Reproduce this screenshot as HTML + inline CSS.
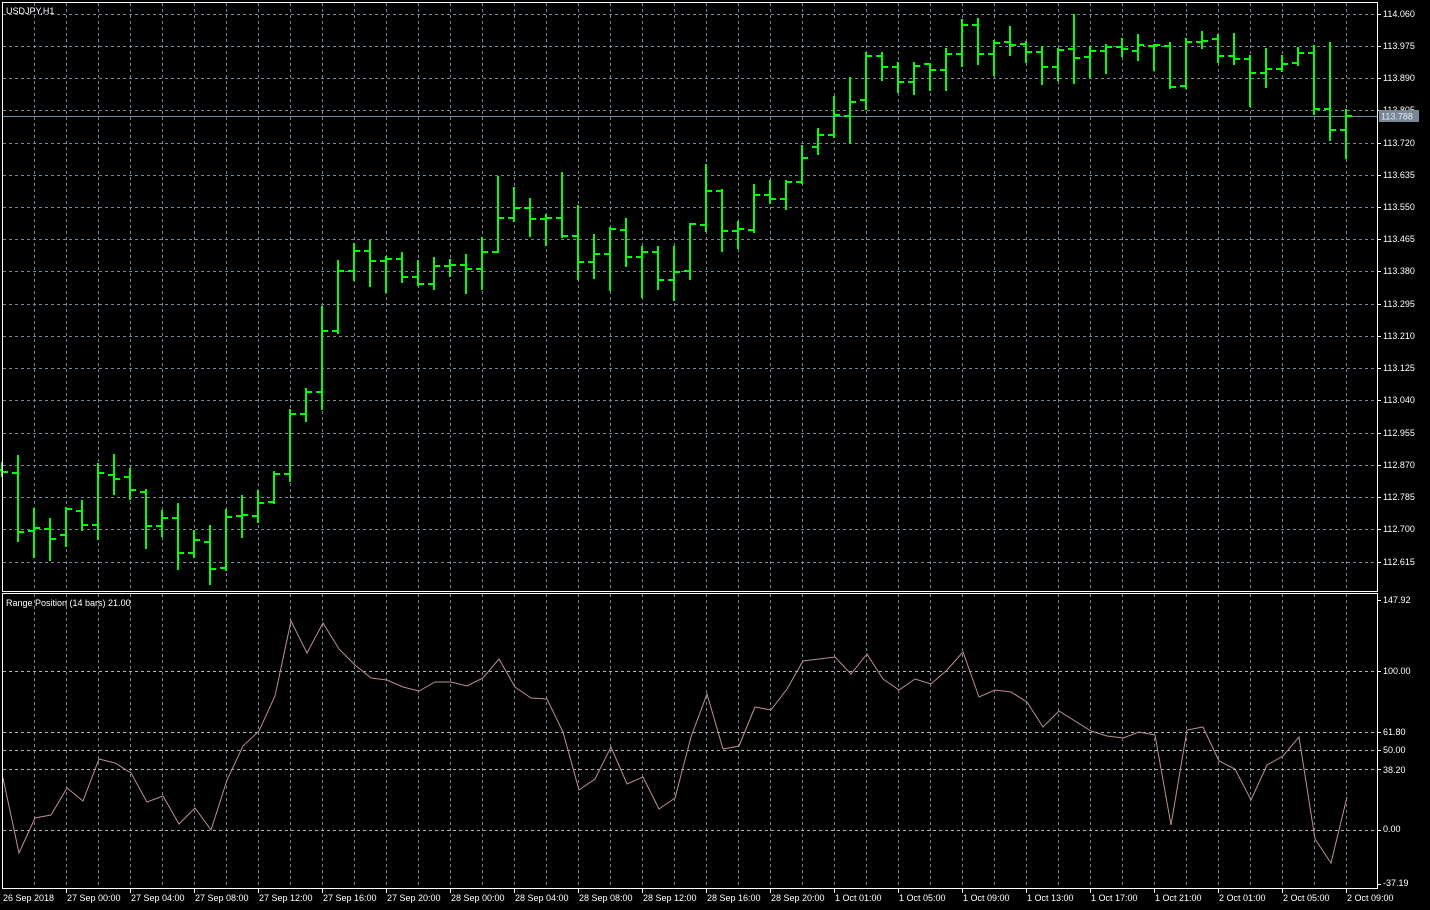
<!DOCTYPE html>
<html><head><meta charset="utf-8"><style>
html,body{margin:0;padding:0;background:#000;width:1430px;height:910px;overflow:hidden}
svg{display:block}
text{font-family:"Liberation Sans",sans-serif;font-size:9px;fill:#fff}
</style></head><body>
<svg id="s" width="1430" height="910" xmlns="http://www.w3.org/2000/svg">
<g id="grid"></g>
<line x1="2" y1="116.5" x2="1377" y2="116.5" stroke="#778899" stroke-width="1"/>
<g id="bars" fill="#00ff00"></g>
<polyline id="ind" fill="none" stroke="#bc8f8f" stroke-width="1"/>
<rect x="2.5" y="2.5" width="1375" height="589" fill="none" stroke="#fff"/>
<rect x="2.5" y="593.5" width="1375" height="295" fill="none" stroke="#fff"/>
<g id="ticks" stroke="#fff"></g>
<text x="6" y="14">USDJPY,H1</text>
<text x="6" y="606">Range Position (14 bars) 21.00</text>
<g>
<text x="1383" y="17">114.060</text>
<text x="1383" y="49">113.975</text>
<text x="1383" y="81">113.890</text>
<text x="1383" y="113">113.805</text>
<text x="1383" y="146">113.720</text>
<text x="1383" y="178">113.635</text>
<text x="1383" y="210">113.550</text>
<text x="1383" y="242">113.465</text>
<text x="1383" y="274">113.380</text>
<text x="1383" y="307">113.295</text>
<text x="1383" y="339">113.210</text>
<text x="1383" y="371">113.125</text>
<text x="1383" y="403">113.040</text>
<text x="1383" y="436">112.955</text>
<text x="1383" y="468">112.870</text>
<text x="1383" y="500">112.785</text>
<text x="1383" y="532">112.700</text>
<text x="1383" y="565">112.615</text>
</g>
<rect x="1379" y="110" width="40" height="12" fill="#778899"/>
<text x="1381" y="119.5" style="fill:#e8e8e8">113.788</text>
<g>
<text x="1383" y="603">147.92</text>
<text x="1383" y="674">100.00</text>
<text x="1383" y="735">61.80</text>
<text x="1383" y="753">50.00</text>
<text x="1383" y="773">38.20</text>
<text x="1383" y="832">0.00</text>
<text x="1383" y="886">-37.19</text>
</g>
<g>
<text x="3" y="901">26 Sep 2018</text>
<text x="67" y="901">27 Sep 00:00</text>
<text x="131" y="901">27 Sep 04:00</text>
<text x="195" y="901">27 Sep 08:00</text>
<text x="259" y="901">27 Sep 12:00</text>
<text x="323" y="901">27 Sep 16:00</text>
<text x="387" y="901">27 Sep 20:00</text>
<text x="451" y="901">28 Sep 00:00</text>
<text x="515" y="901">28 Sep 04:00</text>
<text x="579" y="901">28 Sep 08:00</text>
<text x="643" y="901">28 Sep 12:00</text>
<text x="707" y="901">28 Sep 16:00</text>
<text x="771" y="901">28 Sep 20:00</text>
<text x="835" y="901">1 Oct 01:00</text>
<text x="899" y="901">1 Oct 05:00</text>
<text x="963" y="901">1 Oct 09:00</text>
<text x="1027" y="901">1 Oct 13:00</text>
<text x="1091" y="901">1 Oct 17:00</text>
<text x="1155" y="901">1 Oct 21:00</text>
<text x="1219" y="901">2 Oct 01:00</text>
<text x="1283" y="901">2 Oct 05:00</text>
<text x="1347" y="901">2 Oct 09:00</text>
</g>
</svg>
<script>
var NS="http://www.w3.org/2000/svg";
function el(p,t,a){var e=document.createElementNS(NS,t);for(var k in a)e.setAttribute(k,a[k]);p.appendChild(e);return e;}
var g=document.getElementById("grid");
for(var x=34;x<1377;x+=32){
 el(g,"line",{x1:x+.5,y1:3,x2:x+.5,y2:591,stroke:"#778899","stroke-dasharray":"3,3"});
 el(g,"line",{x1:x+.5,y1:594,x2:x+.5,y2:888,stroke:"#778899","stroke-dasharray":"3,3"});
}
var hy=[14,46,78,110,143,175,207,239,271,304,336,368,400,433,465,497,529,562];
var tk=document.getElementById("ticks");
hy.forEach(function(y){el(g,"line",{x1:3,y1:y+.5,x2:1377,y2:y+.5,stroke:"#778899","stroke-dasharray":"3,3"});el(tk,"line",{x1:1377,y1:y+.5,x2:1381,y2:y+.5});});
[671,732,750,769,830].forEach(function(y){el(g,"line",{x1:3,y1:y+.5,x2:1377,y2:y+.5,stroke:"#b0b4c0","stroke-dasharray":"3,3"});el(tk,"line",{x1:1377,y1:y+.5,x2:1381,y2:y+.5});});
[600,884].forEach(function(y){el(tk,"line",{x1:1377,y1:y+.5,x2:1381,y2:y+.5});});
for(var x=66;x<1377;x+=64){el(tk,"line",{x1:x+.5,y1:889,x2:x+.5,y2:893});}
// H,L,O,C in pixels
var B=[[462,476,470,472],[455,541,473,532],[508,557,531,528],[518,560,529,539],[507,546,535,509],[500,530,511,525],[463,539,525,473],[454,494,475,479],[468,499,477,490],[489,548,492,526],[510,536,526,518],[503,569,518,553],[530,557,553,540],[525,584,542,569],[509,570,568,517],[495,537,516,515],[490,522,516,503],[471,503,502,474],[409,481,474,414],[388,421,414,392],[306,409,392,331],[260,333,331,271],[243,280,271,251],[240,286,251,261],[256,292,261,259],[252,282,259,277],[260,285,277,284],[257,289,284,266],[259,276,266,265],[254,293,265,269],[237,289,269,252],[176,252,252,218],[187,221,218,208],[198,236,208,219],[214,245,219,218],[172,237,218,236],[205,279,236,262],[234,278,262,254],[227,290,254,229],[218,266,230,257],[246,297,257,252],[246,289,252,280],[246,300,280,272],[223,279,271,224],[164,231,225,191],[189,251,191,231],[221,248,231,229],[184,232,230,195],[180,203,195,199],[180,209,199,182],[145,183,182,158],[128,154,147,135],[96,137,135,115],[77,143,116,102],[52,109,100,56],[52,80,56,67],[62,92,67,82],[62,94,82,66],[64,90,64,70],[48,90,70,54],[19,66,54,25],[18,64,25,54],[40,75,54,43],[26,55,42,45],[41,62,44,52],[46,84,52,67],[48,80,67,50],[14,83,49,58],[46,77,57,51],[44,73,51,47],[38,56,47,49],[34,60,51,45],[44,70,46,45],[42,88,46,87],[38,88,86,42],[31,48,42,41],[34,62,39,56],[33,64,56,59],[55,106,59,73],[48,87,73,69],[55,71,69,64],[47,65,63,53],[45,114,53,109],[42,140,109,130],[109,158,130,116]];
var bg=document.getElementById("bars");
B.forEach(function(b,k){var x=2+16*k;var h=b[0],l=b[1];
 el(bg,"rect",{x:x-1,y:h,width:2,height:l-h+1});
 el(bg,"rect",{x:x-6,y:b[2]-1,width:6,height:2});
 el(bg,"rect",{x:x,y:b[3]-1,width:6,height:2});});
var I=[778,853,818,815,788,801,759,763,773,802,796,824,808,830,780,746,731,696,621,653,623,649,665,678,680,687,691,682,682,686,678,659,687,698,699,732,790,779,747,784,777,809,798,737,694,749,746,707,710,689,661,659,657,674,654,679,690,679,684,670,652,697,690,692,702,727,711,721,731,736,738,732,735,825,730,727,761,769,800,765,756,737,839,863,797];
document.getElementById("ind").setAttribute("points",I.map(function(y,k){return (3+16*k)+","+y;}).join(" "));
</script>
</body></html>
